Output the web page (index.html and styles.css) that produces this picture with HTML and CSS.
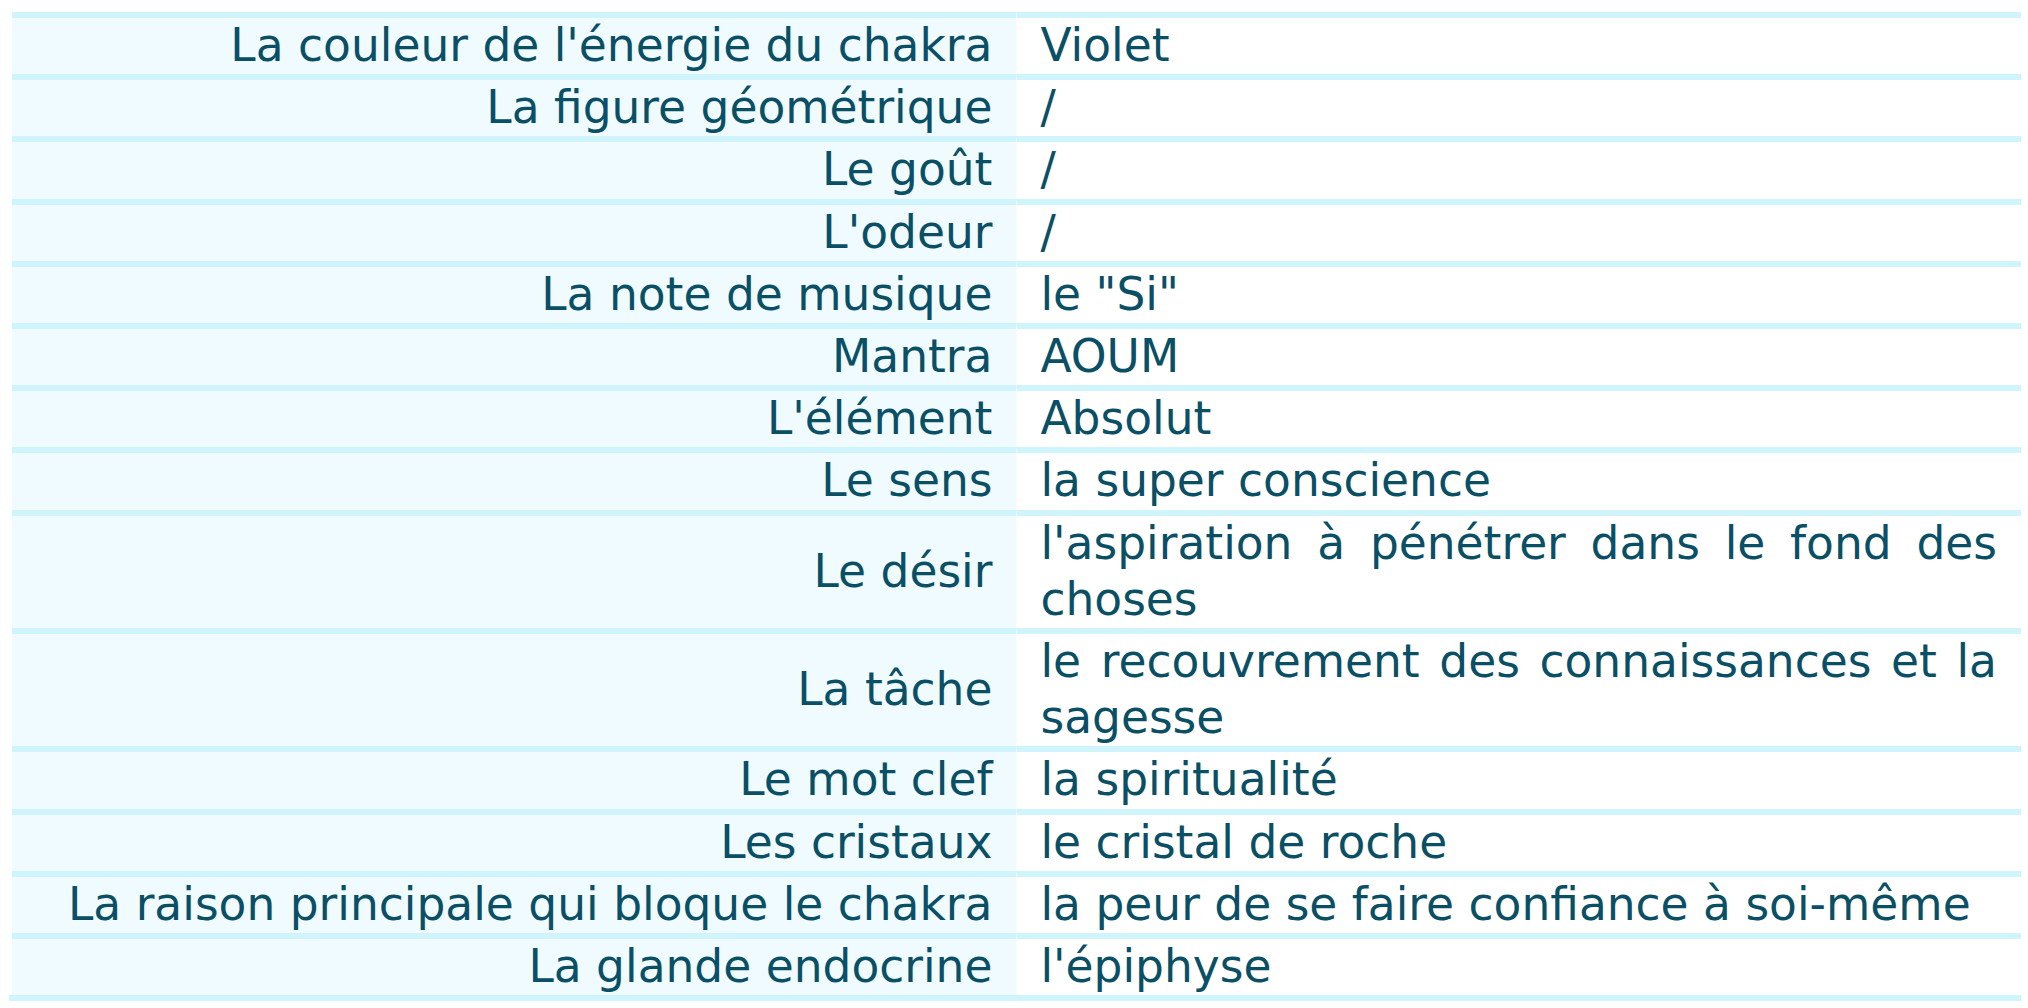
FILE: index.html
```html
<!DOCTYPE html>
<html lang="fr">
<head>
<meta charset="utf-8">
<title>Chakra</title>
<link rel="stylesheet" href="styles.css">
</head>
<body>
<div class="wrap">
  <table class="chakra">
    <tbody>
      <tr><td class="k">La couleur de l'énergie du chakra</td><td class="v">Violet</td></tr>
      <tr><td class="k">La figure géométrique</td><td class="v">/</td></tr>
      <tr><td class="k">Le goût</td><td class="v">/</td></tr>
      <tr><td class="k">L'odeur</td><td class="v">/</td></tr>
      <tr><td class="k">La note de musique</td><td class="v">le "Si"</td></tr>
      <tr><td class="k">Mantra</td><td class="v">AOUM</td></tr>
      <tr><td class="k">L'élément</td><td class="v">Absolut</td></tr>
      <tr><td class="k">Le sens</td><td class="v">la super conscience</td></tr>
      <tr><td class="k">Le désir</td><td class="v">l'aspiration à pénétrer dans le fond des choses</td></tr>
      <tr><td class="k">La tâche</td><td class="v">le recouvrement des connaissances et la sagesse</td></tr>
      <tr><td class="k">Le mot clef</td><td class="v">la spiritualité</td></tr>
      <tr><td class="k">Les cristaux</td><td class="v">le cristal de roche</td></tr>
      <tr><td class="k">La raison principale qui bloque le chakra</td><td class="v">la peur de se faire confiance à soi-même</td></tr>
      <tr><td class="k">La glande endocrine</td><td class="v">l'épiphyse</td></tr>
    </tbody>
  </table>
  <div class="bottom-rule"></div>
</div>
</body>
</html>
```

FILE: styles.css
```css
html, body {
  margin: 0;
  padding: 0;
  background: #ffffff;
}

.wrap {
  padding: 12px 7px 0 12px;
}

.chakra {
  width: 100%;
  border-collapse: separate;
  border-spacing: 0;
  table-layout: fixed;
  font-family: "DejaVu Sans", "Liberation Sans", sans-serif;
  font-size: 45.5px;
  line-height: 56.2px;
  color: #0b4f65;
}

.chakra td {
  border-top: 6px solid #cff4fc;
  padding: 0 24px;
  vertical-align: middle;
  width: 50%;
}

.chakra td.k {
  background: #effbff;
  text-align: right;
  border-right: 1px solid #f8feff;
}

.chakra td.v {
  background: #ffffff;
  text-align: justify;
  padding-left: 23px;
}

.bottom-rule {
  height: 6px;
  margin-left: -3px;
  background: #cff4fc;
}
```
